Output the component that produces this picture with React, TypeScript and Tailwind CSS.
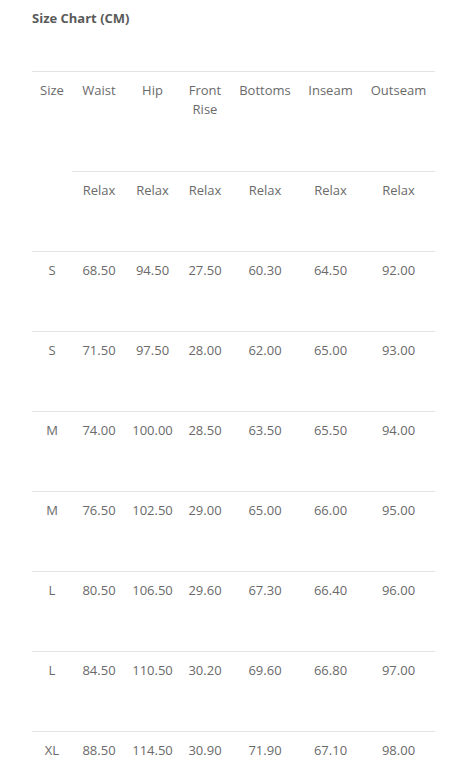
import React from "react";

const rows = [
  ["S", "68.50", "94.50", "27.50", "60.30", "64.50", "92.00"],
  ["S", "71.50", "97.50", "28.00", "62.00", "65.00", "93.00"],
  ["M", "74.00", "100.00", "28.50", "63.50", "65.50", "94.00"],
  ["M", "76.50", "102.50", "29.00", "65.00", "66.00", "95.00"],
  ["L", "80.50", "106.50", "29.60", "67.30", "66.40", "96.00"],
  ["L", "84.50", "110.50", "30.20", "69.60", "66.80", "97.00"],
  ["XL", "88.50", "114.50", "30.90", "71.90", "67.10", "98.00"],
];

const widths = ["w-[40px]", "w-[54px]", "w-[53px]", "w-[52px]", "w-[68px]", "w-[63px]", "w-[73px]"];

const cell = "border-t border-[#e3e3e3] pt-[9px] align-top text-center font-normal";

const App = () => {
  return (
    <div className="min-h-[779px] bg-white pl-[32px] text-[#6a6a6a]" style={{ fontFamily: '"Open Sans", sans-serif' }}>
      <h2 className="pt-[9px] text-[13px] font-bold leading-[18px] text-[#5a5a5a]">Size Chart (CM)</h2>

      <table className="mt-[44px] w-[403px] table-fixed border-collapse text-[13px] leading-[19px]">
        <colgroup>
          {widths.map((w, i) => (
            <col key={i} className={w} />
          ))}
        </colgroup>
        <thead>
          <tr className="h-[100px]">
            <th rowSpan={2} className={cell}>Size</th>
            <th className={cell}>Waist</th>
            <th className={cell}>Hip</th>
            <th className={cell}>Front<br />Rise</th>
            <th className={cell}>Bottoms</th>
            <th className={cell}>Inseam</th>
            <th className={cell}>Outseam</th>
          </tr>
          <tr className="h-[80px]">
            {[0, 1, 2, 3, 4, 5].map((i) => (
              <td key={i} className={cell}>Relax</td>
            ))}
          </tr>
        </thead>
        <tbody>
          {rows.map((r, i) => (
            <tr key={i} className="h-[80px]">
              {r.map((v, j) => (
                <td key={j} className={cell}>{v}</td>
              ))}
            </tr>
          ))}
        </tbody>
      </table>
    </div>
  );
};

export default App;
